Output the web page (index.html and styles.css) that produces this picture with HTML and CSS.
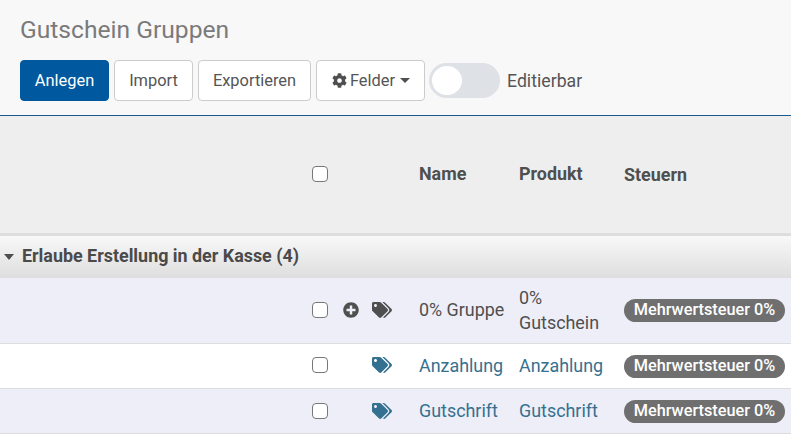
FILE: index.html
```html
<!DOCTYPE html>
<html lang="de">
<head>
<meta charset="utf-8">
<title>Gutschein Gruppen</title>
<link rel="stylesheet" href="styles.css">
</head>
<body>
<svg class="defs" width="0" height="0" aria-hidden="true">
  <symbol id="i-tags" viewBox="0 0 640 512"><path d="M497.941 225.941L286.059 14.059A48 48 0 0 0 252.118 0H48C21.49 0 0 21.49 0 48v204.118a48 48 0 0 0 14.059 33.941l211.882 211.882c18.744 18.745 49.136 18.746 67.882 0l204.118-204.118c18.745-18.745 18.745-49.137 0-67.882zM112 160c-26.51 0-48-21.49-48-48s21.49-48 48-48 48 21.49 48 48-21.49 48-48 48zm513.941 133.823L421.823 497.941c-18.745 18.745-49.137 18.745-67.882 0l-.36-.36L527.64 323.522c16.999-16.999 26.36-39.6 26.36-63.64s-9.362-46.641-26.36-63.64L331.397 0h48.721a48 48 0 0 1 33.941 14.059l211.882 211.882c18.745 18.745 18.745 49.137 0 67.882z"/></symbol>
  <symbol id="i-plus" viewBox="0 0 512 512"><path d="M256 8C119 8 8 119 8 256s111 248 248 248 248-111 248-248S393 8 256 8zm144 276c0 6.6-5.4 12-12 12h-92v92c0 6.6-5.4 12-12 12h-56c-6.6 0-12-5.4-12-12v-92h-92c-6.6 0-12-5.4-12-12v-56c0-6.6 5.4-12 12-12h92v-92c0-6.6 5.4-12 12-12h56c6.6 0 12 5.4 12 12v92h92c6.6 0 12 5.4 12 12v56z"/></symbol>
  <symbol id="i-cog" viewBox="0 0 512 512"><path d="M487.4 315.7l-42.6-24.6c4.3-23.2 4.3-47 0-70.2l42.6-24.6c4.9-2.8 7.1-8.6 5.5-14-11.1-35.6-30-67.8-54.7-94.6-3.8-4.1-10-5.1-14.8-2.3L380.8 110c-17.9-15.4-38.5-27.3-60.8-35.1V25.8c0-5.6-3.9-10.5-9.4-11.7-36.7-8.2-74.3-7.8-109.2 0-5.5 1.2-9.4 6.1-9.4 11.7V75c-22.2 7.9-42.8 19.8-60.8 35.1L88.7 85.5c-4.9-2.8-11-1.9-14.8 2.3-24.7 26.7-43.6 58.9-54.7 94.6-1.7 5.4.6 11.2 5.5 14L67.3 221c-4.3 23.2-4.3 47 0 70.2l-42.6 24.6c-4.9 2.8-7.1 8.6-5.5 14 11.1 35.6 30 67.8 54.7 94.6 3.8 4.1 10 5.1 14.8 2.3l42.6-24.6c17.9 15.4 38.5 27.3 60.8 35.1v49.2c0 5.6 3.9 10.5 9.4 11.7 36.7 8.2 74.3 7.8 109.2 0 5.5-1.2 9.4-6.1 9.4-11.7v-49.2c22.2-7.9 42.8-19.8 60.8-35.1l42.6 24.6c4.9 2.8 11 1.9 14.8-2.3 24.7-26.7 43.6-58.9 54.7-94.6 1.5-5.5-.7-11.3-5.6-14.1zM256 336c-44.1 0-80-35.9-80-80s35.9-80 80-80 80 35.9 80 80-35.9 80-80 80z"/></symbol>
</svg>
<header class="page-head">
  <h1 class="title">Gutschein Gruppen</h1>
  <div class="toolbar">
    <button class="btn btn-primary btn-add">Anlegen</button>
    <button class="btn btn-import">Import</button>
    <button class="btn btn-export">Exportieren</button>
    <button class="btn btn-fields"><svg class="icon-cog"><use href="#i-cog"/></svg>Felder<span class="caret"></span></button>
    <span class="switch"><span class="knob"></span></span>
    <span class="switch-label">Editierbar</span>
  </div>
</header>
<table class="grid">
  <colgroup>
    <col class="c-space"><col class="c-check"><col class="c-plus"><col class="c-tag"><col class="c-name"><col class="c-prod"><col class="c-tax">
  </colgroup>
  <thead>
    <tr class="head-row">
      <th></th>
      <th><span class="check"></span></th>
      <th></th>
      <th></th>
      <th class="th-name">Name</th>
      <th class="th-prod">Produkt</th>
      <th class="th-tax">Steuern</th>
    </tr>
  </thead>
  <tbody>
    <tr class="group-row">
      <td colspan="7"><span class="group-caret"></span>Erlaube Erstellung in der Kasse (4)</td>
    </tr>
    <tr class="row alt tall">
      <td></td>
      <td><span class="check"></span></td>
      <td><svg class="icon-plus"><use href="#i-plus"/></svg></td>
      <td><svg class="icon-tags"><use href="#i-tags"/></svg></td>
      <td>0% Gruppe</td>
      <td>0% Gutschein</td>
      <td><span class="badge">Mehrwertsteuer 0%</span></td>
    </tr>
    <tr class="row link">
      <td></td>
      <td><span class="check"></span></td>
      <td></td>
      <td><svg class="icon-tags"><use href="#i-tags"/></svg></td>
      <td>Anzahlung</td>
      <td>Anzahlung</td>
      <td><span class="badge">Mehrwertsteuer 0%</span></td>
    </tr>
    <tr class="row alt link">
      <td></td>
      <td><span class="check"></span></td>
      <td></td>
      <td><svg class="icon-tags"><use href="#i-tags"/></svg></td>
      <td>Gutschrift</td>
      <td>Gutschrift</td>
      <td><span class="badge">Mehrwertsteuer 0%</span></td>
    </tr>
  </tbody>
</table>
</body>
</html>
```

FILE: styles.css
```css
* { box-sizing: border-box; }
html, body { margin: 0; padding: 0; }
body {
  width: 791px;
  height: 436px;
  overflow: hidden;
  background: #fff;
  color: #4f4f4f;
  font-family: Roboto, "Liberation Sans", sans-serif;
  font-size: 17.9px;
}
.defs { position: absolute; }
.page-head {
  height: 116px;
  padding: 14px 20px 0;
  background: #f8f8f8;
  border-bottom: 1px solid #1a5a8a;
}
.title {
  margin: 0;
  height: 32px;
  font-size: 24.6px;
  line-height: 32px;
  font-weight: 400;
  color: #7a7a7a;
}
.toolbar {
  display: flex;
  align-items: center;
  margin-top: 14px;
  height: 41px;
}
.btn {
  height: 41px;
  margin-right: 5px;
  padding: 0;
  border: 1px solid #ccc;
  border-radius: 4px;
  background: #fff;
  color: #555;
  font: 400 16.4px Roboto, sans-serif;
}
.btn-primary { background: #00589f; border-color: #00589f; color: #fff; }
.btn-add { width: 89px; }
.btn-import { width: 79px; }
.btn-export { width: 113px; }
.btn-fields {
  width: 109px;
  margin-right: 4px;
  padding-left: 1px;
  display: flex;
  align-items: center;
  justify-content: center;
}
.icon-cog { width: 15px; height: 15px; margin-right: 3px; fill: #4f4f4f; }
.caret {
  margin-left: 5px;
  border-left: 5.5px solid transparent;
  border-right: 5.5px solid transparent;
  border-top: 5px solid #4f4f4f;
}
.switch {
  display: block;
  position: relative;
  width: 71px;
  height: 35px;
  border-radius: 18px;
  background: #dee1e6;
}
.knob {
  position: absolute;
  left: 3px;
  top: 3px;
  width: 30px;
  height: 29px;
  border-radius: 50%;
  background: #fff;
}
.switch-label { margin-left: 7px; color: #555; font-size: 17.7px; }
.grid {
  width: 791px;
  table-layout: fixed;
  border-collapse: separate;
  border-spacing: 0;
}
.c-space { width: 300px; }
.c-check { width: 36px; }
.c-plus { width: 29px; }
.c-tag { width: 54px; }
.c-name { width: 100px; }
.c-prod { width: 98px; }
.c-tax { width: 174px; }
.grid th, .grid td { padding: 0; text-align: left; vertical-align: middle; }
.head-row th {
  height: 120px;
  padding-bottom: 1px;
  background: #eee;
  border-bottom: 3px solid #ddd;
  font-weight: 700;
  color: #4f4f4f;
}
.grid .th-name, .grid .th-prod { padding-bottom: 3px; }
.grid .th-tax { padding-left: 7px; padding-bottom: 1px; }
.grid .group-row td {
  height: 42px;
  padding: 0 0 3px 4px;
  background: linear-gradient(#f8f8f8, #dedede);
  font-weight: 700;
  color: #4a4a4a;
}
.group-caret {
  display: inline-block;
  margin-right: 8px;
  vertical-align: 2px;
  border-left: 5.5px solid transparent;
  border-right: 5.5px solid transparent;
  border-top: 6px solid #4f4f4f;
}
.grid .row td { height: 45px; padding-bottom: 2px; border-bottom: 1px solid #ddd; }
.grid .row.tall td { height: 66px; line-height: 25px; }
.row.alt td { background: #eeeef8; }
.grid .head-row th:nth-child(2), .grid .row td:nth-child(2) { padding-left: 12px; }
.grid .row td:nth-child(3), .grid .row td:nth-child(4) { padding-left: 7px; }
.grid .row td:nth-child(7) { padding: 0 0 0 7px; }
.grid .row.alt.link td:nth-child(2), .grid .row.alt.link td:nth-child(4) { padding-bottom: 0; }
.row.link td { color: #35708f; }
.check {
  display: block;
  width: 16px;
  height: 16px;
  background: #fff;
  border: 1.5px solid #777;
  border-radius: 4px;
}
.icon-plus { display: block; width: 16px; height: 16px; fill: #4f4f4f; }
.icon-tags { display: block; width: 20px; height: 16px; fill: #4f4f4f; }
.row.link .icon-tags { fill: #34708f; }
.badge {
  display: block;
  width: 161px;
  height: 23px;
  line-height: 22px;
  border-radius: 12px;
  background: #6f6f6f;
  color: #fff;
  text-align: center;
  font-size: 16.3px;
  font-weight: 500;
}
```
